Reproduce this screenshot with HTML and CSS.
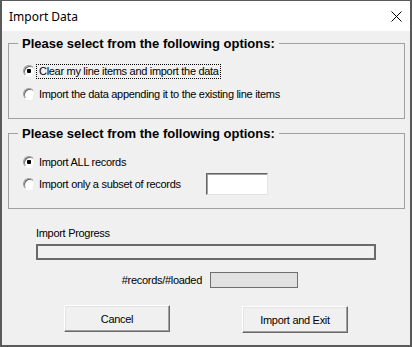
FILE: index.html
```html
<!DOCTYPE html>
<html>
<head>
  <meta charset="UTF-8">
  <title>Import Data</title>
  <link rel="stylesheet" href="styles.css">
</head>
<body>
  <div class="window">

    <!-- Title bar -->
    <div class="titlebar">
      <span class="title">Import Data</span>
      <svg class="close" width="11" height="11" viewBox="0 0 11 11">
        <path d="M0.5 0.5 L10.5 10.5 M10.5 0.5 L0.5 10.5" stroke="#000" stroke-width="1" fill="none"/>
      </svg>
    </div>

    <div class="content">

      <!-- Line item mode -->
      <fieldset class="frame frame-mode">
        <legend>Please select from the following options:</legend>
        <label class="option">
          <input type="radio" name="mode" checked>
          <span class="caption focused">Clear my line items and import the data</span>
        </label>
        <label class="option">
          <input type="radio" name="mode">
          <span class="caption">Import the data appending it to the existing line items</span>
        </label>
      </fieldset>

      <!-- Record range -->
      <fieldset class="frame frame-range">
        <legend>Please select from the following options:</legend>
        <label class="option">
          <input type="radio" name="range" checked>
          <span class="caption">Import ALL records</span>
        </label>
        <div class="option option-subset">
          <label class="subset-label">
            <input type="radio" name="range">
            <span class="caption">Import only a subset of records</span>
          </label>
          <input type="text" class="subset-input">
        </div>
      </fieldset>

      <!-- Progress -->
      <div class="progress-label">Import Progress</div>
      <div class="progress"></div>

      <div class="records">
        <span class="records-label">#records/#loaded</span>
        <span class="records-box"></span>
      </div>

      <div class="buttons">
        <button class="btn btn-cancel">Cancel</button>
        <button class="btn btn-import">Import and Exit</button>
      </div>
    </div>
  </div>
</body>
</html>
```

FILE: styles.css
```css
body {
  margin: 0;
  font-family: 'Liberation Sans', Arial, sans-serif;
  font-size: 11px;
  letter-spacing: -0.3px;
  color: #000;
  background: #f0f0f0;
}

.window {
  width: 412px;
  height: 347px;
  box-sizing: border-box;
  border: 2px solid #5a5a5a;
  border-top-width: 1px;
  background: #f0f0f0;
  display: flex;
  flex-direction: column;
}

.titlebar {
  height: 30px;
  background: #fff;
  display: flex;
  align-items: center;
  justify-content: space-between;
  padding: 0 8px 0 7px;
  flex-shrink: 0;
}

.title {
  font-family: 'Noto Sans', sans-serif;
  font-size: 12px;
  letter-spacing: 0;
  line-height: 16px;
  margin-top: 1px;
}

.close {
  display: block;
  margin-top: 1px;
}

.content {
  padding: 0 0 0 6px;
  display: flex;
  flex-direction: column;
  align-items: flex-start;
}

/* Frames */
.frame {
  width: 397px;
  box-sizing: border-box;
  margin: 4px 0 0 0;
  border: 1px solid #a0a0a0;
  padding: 11px 0 16px 14px;
  display: flex;
  flex-direction: column;
  gap: 7px;
}

.frame legend {
  font-weight: bold;
  font-size: 13px;
  letter-spacing: 0;
  line-height: 17px;
  padding: 0 4px;
  margin-left: -5px;
}

.frame-range {
  margin-top: 6px;
  padding-top: 12px;
  padding-bottom: 13px;
  gap: 3px;
}

.option {
  display: flex;
  align-items: center;
  height: 16px;
}

.option input[type="radio"] {
  appearance: none;
  margin: 0;
  width: 12px;
  height: 12px;
  border-radius: 50%;
  box-sizing: border-box;
  border: 1px solid;
  border-color: #9a9a9a #e8e8e8 #ffffff #9a9a9a;
  background: #fff;
  box-shadow: inset 1px 1px 0 #6a6a6a;
  flex-shrink: 0;
}

.option input[type="radio"]:checked {
  background: radial-gradient(circle at 50% 50%, #000 0, #000 2px, #fff 2.5px);
}

.caption {
  margin-left: 1px;
  padding: 0 1px 0 2px;
  border: 1px dotted transparent;
  line-height: 13px;
  white-space: nowrap;
}

.caption.focused {
  border-color: #000;
}

.option-subset {
  height: 22px;
}

.subset-label {
  display: flex;
  align-items: center;
  width: 183px;
}

.subset-input {
  width: 62px;
  height: 22px;
  box-sizing: border-box;
  margin: 0;
  padding: 0;
  background: #fff;
  border: 1px solid;
  border-color: #646464 #e3e3e3 #e3e3e3 #646464;
  box-shadow: inset 1px 1px 0 #a0a0a0;
}

/* Progress */
.progress-label {
  margin: 17px 0 0 28px;
  line-height: 14px;
}

.progress {
  margin: 4px 0 0 28px;
  width: 340px;
  height: 16px;
  box-sizing: border-box;
  border: 2px solid #6a6a6a;
  background: #f0f0f0;
}

.records {
  margin-top: 12px;
  display: grid;
  grid-template-columns: 194px 88px;
  column-gap: 8px;
  align-items: center;
}

.records-label {
  text-align: right;
  line-height: 14px;
}

.records-box {
  height: 16px;
  box-sizing: border-box;
  border: 1px solid #6e6e6e;
  background: #e1e1e1;
}

/* Buttons */
.buttons {
  margin: 17px 0 0 56px;
  display: flex;
  align-items: flex-start;
  gap: 72px;
}

.btn {
  width: 106px;
  height: 27px;
  margin: 0;
  padding: 0;
  box-sizing: border-box;
  font-family: inherit;
  font-size: 11px;
  letter-spacing: -0.3px;
  color: #000;
  background: #f0f0f0;
  border: 1px solid;
  border-color: #ffffff #696969 #696969 #ffffff;
  box-shadow: inset -1px -1px 0 #a0a0a0, inset 1px 1px 0 #e3e3e3;
}

.btn-import {
  margin-top: 1px;
}
```
